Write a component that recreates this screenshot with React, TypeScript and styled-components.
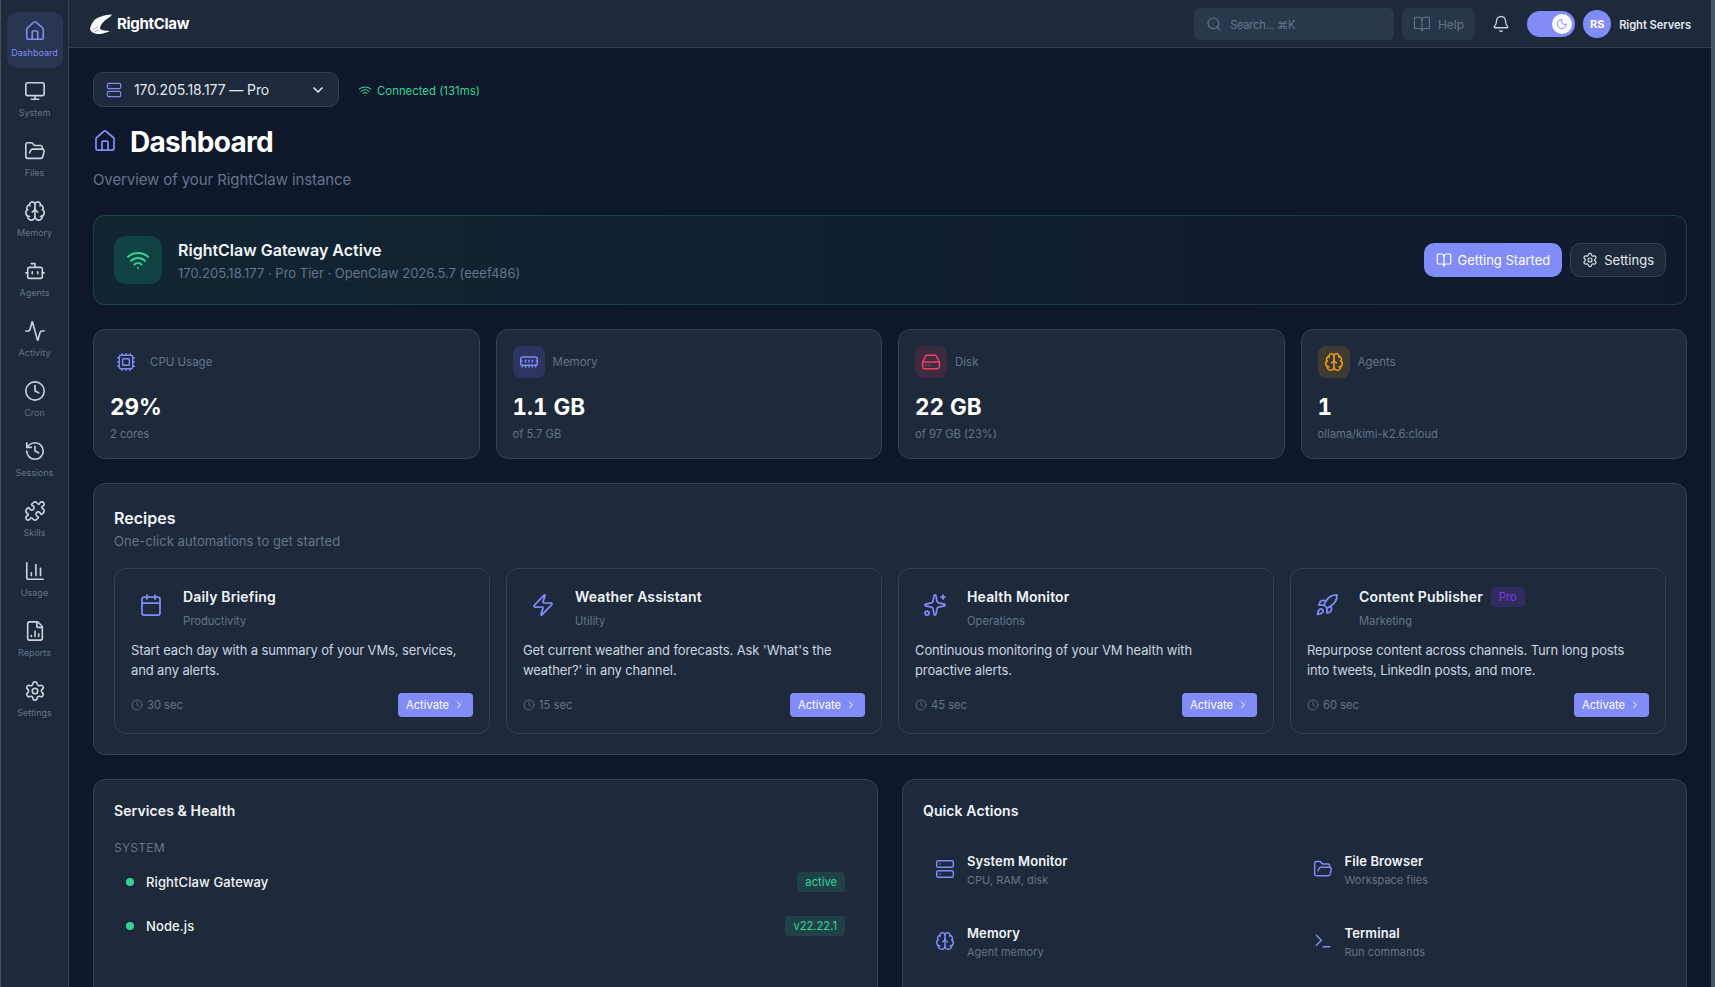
import { FC, ReactNode } from "react";
import styled, { createGlobalStyle } from "styled-components";
import {
  Activity,
  Bell,
  BookOpen,
  Bot,
  Brain,
  Calendar,
  ChartColumn,
  ChevronDown,
  ChevronRight,
  Clock,
  Cpu,
  FileChartColumn,
  FolderOpen,
  HardDrive,
  History,
  House,
  MemoryStick,
  Monitor,
  Moon,
  Puzzle,
  Rocket,
  Search,
  Server,
  Settings,
  Sparkles,
  Terminal,
  Wifi,
  Zap,
} from "lucide-react";

const GlobalStyle = createGlobalStyle`
  html, body {
    margin: 0;
    height: 100%;
    background: #0f172a;
    font-family: "Inter", "Liberation Sans", sans-serif;
    overflow: hidden;
  }
  * {
    box-sizing: border-box;
  }
`;

const navItems = [
  { label: "Dashboard", icon: House },
  { label: "System", icon: Monitor },
  { label: "Files", icon: FolderOpen },
  { label: "Memory", icon: Brain },
  { label: "Agents", icon: Bot },
  { label: "Activity", icon: Activity },
  { label: "Cron", icon: Clock },
  { label: "Sessions", icon: History },
  { label: "Skills", icon: Puzzle },
  { label: "Usage", icon: ChartColumn },
  { label: "Reports", icon: FileChartColumn },
  { label: "Settings", icon: Settings },
];

const stats = [
  { label: "CPU Usage", value: "29%", sub: "2 cores", icon: Cpu, color: "#818cf8", tint: "transparent" },
  { label: "Memory", value: "1.1 GB", sub: "of 5.7 GB", icon: MemoryStick, color: "#818cf8", tint: "rgba(99, 102, 241, 0.2)" },
  { label: "Disk", value: "22 GB", sub: "of 97 GB (23%)", icon: HardDrive, color: "#f43f5e", tint: "rgba(244, 63, 94, 0.15)" },
  { label: "Agents", value: "1", sub: "ollama/kimi-k2.6:cloud", icon: Brain, color: "#f59e0b", tint: "rgba(245, 158, 11, 0.15)" },
];

const recipes = [
  {
    title: "Daily Briefing",
    category: "Productivity",
    text: "Start each day with a summary of your VMs, services, and any alerts.",
    time: "30 sec",
    icon: Calendar,
  },
  {
    title: "Weather Assistant",
    category: "Utility",
    text: "Get current weather and forecasts. Ask 'What's the weather?' in any channel.",
    time: "15 sec",
    icon: Zap,
  },
  {
    title: "Health Monitor",
    category: "Operations",
    text: "Continuous monitoring of your VM health with proactive alerts.",
    time: "45 sec",
    icon: Sparkles,
  },
  {
    title: "Content Publisher",
    category: "Marketing",
    text: "Repurpose content across channels. Turn long posts into tweets, LinkedIn posts, and more.",
    time: "60 sec",
    icon: Rocket,
    pro: true,
  },
];

const quickActions = [
  { title: "System Monitor", sub: "CPU, RAM, disk", icon: Server },
  { title: "File Browser", sub: "Workspace files", icon: FolderOpen },
  { title: "Memory", sub: "Agent memory", icon: Brain },
  { title: "Terminal", sub: "Run commands", icon: Terminal },
];

const Logo: FC = () => (
  <svg width="22" height="20" viewBox="0 0 22 20" fill="none">
    <path
      d="M22 .5C15 1 8 2.5 4 6.5C2 9 .5 12 0 15C.5 17.5 3 19.5 7 20C11 20.3 15 19.3 20 17C16 16.5 12.5 17 10 15C10 11 14 7 17 5C19 3.8 21 2.2 22 .5Z"
      fill="#f8fafc"
    />
    <path d="M2.5 16.5C4 15 6 13.5 8 12.5M4.5 18C6 17 7.5 16.2 9 15.8" stroke="#94a3b8" strokeWidth="0.9" />
  </svg>
);

const Panel: FC<{ title: string; children: ReactNode }> = ({ title, children }) => (
  <Card>
    <PanelTitle>{title}</PanelTitle>
    {children}
  </Card>
);

export default function App() {
  return (
    <>
      <GlobalStyle />
      <Shell>
        <Sidebar>
          {navItems.map(({ label, icon: Icon }, i) => (
            <NavItem key={label} $active={i === 0}>
              <Icon size={22} strokeWidth={1.75} />
              <span>{label}</span>
            </NavItem>
          ))}
        </Sidebar>
        <Column>
          <TopBar>
            <Brand>
              <Logo />
              <span>RightClaw</span>
            </Brand>
            <TopActions>
              <SearchBox>
                <Search size={16} strokeWidth={1.75} />
                <span>Search... ⌘K</span>
              </SearchBox>
              <HelpButton>
                <BookOpen size={18} strokeWidth={1.5} />
                <span>Help</span>
              </HelpButton>
              <BellWrap>
                <Bell size={18} strokeWidth={1.75} />
              </BellWrap>
              <Toggle>
                <Knob>
                  <Moon size={12} strokeWidth={2} color="#818cf8" />
                </Knob>
              </Toggle>
              <UserBox>
                <Avatar>RS</Avatar>
                <UserName>Right Servers</UserName>
              </UserBox>
            </TopActions>
          </TopBar>
          <Main>
            <ServerRow>
              <ServerSelect>
                <ServerIcon>
                  <Server size={16} strokeWidth={1.75} />
                </ServerIcon>
                <span>170.205.18.177 — Pro</span>
                <ChevronDown size={16} strokeWidth={2.5} />
              </ServerSelect>
              <Connected>
                <Wifi size={14} strokeWidth={1.75} />
                <span>Connected (131ms)</span>
              </Connected>
            </ServerRow>

            <TitleRow>
              <TitleIcon>
                <House size={24} strokeWidth={1.75} />
              </TitleIcon>
              <h1>Dashboard</h1>
            </TitleRow>
            <Subtitle>Overview of your RightClaw instance</Subtitle>

            <Banner>
              <BannerIcon>
                <Wifi size={24} strokeWidth={2} />
              </BannerIcon>
              <BannerText>
                <BannerTitle>RightClaw Gateway Active</BannerTitle>
                <BannerSub>170.205.18.177 · Pro Tier · OpenClaw 2026.5.7 (eeef486)</BannerSub>
              </BannerText>
              <BannerActions>
                <PrimaryButton>
                  <BookOpen size={16} strokeWidth={1.75} />
                  Getting Started
                </PrimaryButton>
                <GhostButton>
                  <Settings size={16} strokeWidth={1.75} />
                  Settings
                </GhostButton>
              </BannerActions>
            </Banner>

            <StatGrid>
              {stats.map(({ label, value, sub, icon: Icon, color, tint }) => (
                <StatCard key={label}>
                  <StatHead>
                    <StatIcon $tint={tint} $color={color}>
                      <Icon size={20} strokeWidth={1.75} />
                    </StatIcon>
                    <span>{label}</span>
                  </StatHead>
                  <StatValue>{value}</StatValue>
                  <StatSub>{sub}</StatSub>
                </StatCard>
              ))}
            </StatGrid>

            <RecipesCard>
              <RecipesTitle>Recipes</RecipesTitle>
              <RecipesSub>One-click automations to get started</RecipesSub>
              <RecipeGrid>
                {recipes.map(({ title, category, text, time, icon: Icon, pro }) => (
                  <RecipeCard key={title}>
                    <RecipeHead>
                      <RecipeIcon>
                        <Icon size={24} strokeWidth={1.75} />
                      </RecipeIcon>
                      <div>
                        <RecipeTitle>
                          {title}
                          {pro && <ProTag>Pro</ProTag>}
                        </RecipeTitle>
                        <RecipeCategory>{category}</RecipeCategory>
                      </div>
                    </RecipeHead>
                    <RecipeText>{text}</RecipeText>
                    <RecipeFoot>
                      <RecipeTime>
                        <Clock size={12} strokeWidth={1.75} />
                        {time}
                      </RecipeTime>
                      <ActivateButton>
                        Activate
                        <ChevronRight size={12} strokeWidth={2} />
                      </ActivateButton>
                    </RecipeFoot>
                  </RecipeCard>
                ))}
              </RecipeGrid>
            </RecipesCard>

            <BottomGrid>
              <Panel title="Services & Health">
                <GroupLabel>System</GroupLabel>
                <ServiceRow>
                  <Dot />
                  <ServiceName>RightClaw Gateway</ServiceName>
                  <StatusTag>active</StatusTag>
                </ServiceRow>
                <ServiceRow>
                  <Dot />
                  <ServiceName>Node.js</ServiceName>
                  <StatusTag>v22.22.1</StatusTag>
                </ServiceRow>
              </Panel>
              <Panel title="Quick Actions">
                <QuickGrid>
                  {quickActions.map(({ title, sub, icon: Icon }) => (
                    <QuickItem key={title}>
                      <Icon size={20} strokeWidth={1.75} />
                      <QuickText>
                        <QuickTitle>{title}</QuickTitle>
                        <QuickSub>{sub}</QuickSub>
                      </QuickText>
                    </QuickItem>
                  ))}
                </QuickGrid>
              </Panel>
            </BottomGrid>
          </Main>
        </Column>
      </Shell>
    </>
  );
}

const Shell = styled.div`
  display: flex;
  height: 987px;
  width: 1715px;
  overflow: hidden;
  background: #0f172a;
  border-left: 1px solid #4b4f55;
  border-right: 4px solid #475569;
`;

const Sidebar = styled.nav`
  flex: none;
  width: 68px;
  height: 100%;
  padding-top: 12px;
  display: flex;
  flex-direction: column;
  align-items: center;
  gap: 4px;
  background: #1e293b;
  border-right: 1px solid #334155;
`;

const NavItem = styled.a<{ $active?: boolean }>`
  width: 56px;
  height: 56px;
  flex: none;
  display: flex;
  flex-direction: column;
  align-items: center;
  justify-content: center;
  gap: 5px;
  padding-bottom: 1px;
  border-radius: 10px;
  color: ${(p) => (p.$active ? "#818cf8" : "#cbd5e1")};
  background: ${(p) => (p.$active ? "rgba(129, 140, 248, 0.12)" : "transparent")};

  span {
    font-size: 9px;
    line-height: 12px;
    color: ${(p) => (p.$active ? "#818cf8" : "#64748b")};
  }
`;

const Column = styled.div`
  flex: 1;
  min-width: 0;
  display: flex;
  flex-direction: column;
`;

const TopBar = styled.header`
  flex: none;
  height: 48px;
  display: flex;
  align-items: center;
  justify-content: space-between;
  padding: 0 20px 0 21px;
  background: #1e293b;
  border-bottom: 1px solid #334155;
`;

const Brand = styled.div`
  display: flex;
  align-items: center;
  gap: 5px;
  color: #ffffff;
  font-size: 15px;
  font-weight: 700;
  letter-spacing: -0.02em;
`;

const TopActions = styled.div`
  display: flex;
  align-items: center;
`;

const SearchBox = styled.div`
  width: 200px;
  height: 32px;
  display: flex;
  align-items: center;
  gap: 8px;
  padding: 0 12px;
  border-radius: 6px;
  background: #2b384c;
  color: #64748b;
  font-size: 11.2px;
  letter-spacing: -0.3px;

  span {
    padding-top: 2px;
  }
`;

const HelpButton = styled.div`
  height: 32px;
  width: 73px;
  margin-left: 8px;
  display: flex;
  align-items: center;
  gap: 7px;
  padding: 0 11px;
  border-radius: 6px;
  background: #293548;
  color: #64748b;
  font-size: 12px;

  span {
    padding-top: 2px;
  }
`;

const BellWrap = styled.div`
  margin-left: 17px;
  display: flex;
  color: #cbd5e1;
`;

const Toggle = styled.div`
  width: 48px;
  height: 26px;
  margin-left: 17px;
  display: flex;
  align-items: center;
  justify-content: flex-end;
  padding-right: 3px;
  border-radius: 13px;
  background: #818cf8;
`;

const Knob = styled.div`
  width: 20px;
  height: 20px;
  display: flex;
  align-items: center;
  justify-content: center;
  border-radius: 50%;
  background: #ffffff;
`;

const UserBox = styled.div`
  margin-left: 8px;
  display: flex;
  align-items: center;
  gap: 8px;
`;

const Avatar = styled.div`
  width: 28px;
  height: 28px;
  display: flex;
  align-items: center;
  justify-content: center;
  border-radius: 50%;
  background: #818cf8;
  color: #ffffff;
  font-size: 11px;
  font-weight: 700;
`;

const UserName = styled.span`
  padding-top: 2px;
  color: #e2e8f0;
  font-size: 11.2px;
  font-weight: 600;
  letter-spacing: -0.08px;
`;

const Main = styled.main`
  flex: 1;
  min-height: 0;
  overflow: hidden;
  padding: 24px;
`;

const ServerRow = styled.div`
  display: flex;
  align-items: center;
  gap: 19px;
`;

const ServerSelect = styled.div`
  width: 246px;
  height: 35px;
  display: flex;
  align-items: center;
  padding: 0 12px;
  border-radius: 10px;
  background: #1e293b;
  border: 1px solid #334155;
  color: #e2e8f0;
  font-size: 14px;
  letter-spacing: -0.1px;

  span {
    flex: 1;
  }
`;

const ServerIcon = styled.div`
  display: flex;
  color: #818cf8;
  margin-right: 12px;
`;

const Connected = styled.div`
  display: flex;
  align-items: center;
  gap: 5px;
  padding-top: 2px;
  color: #34d399;
  font-size: 11.4px;
`;

const TitleRow = styled.div`
  display: flex;
  align-items: center;
  gap: 13px;
  margin: 15px 0 0 0;
  height: 40px;

  h1 {
    margin: 0;
    color: #ffffff;
    font-size: 28px;
    line-height: 40px;
    font-weight: 700;
    letter-spacing: -0.025em;
  }
`;

const TitleIcon = styled.div`
  display: flex;
  padding-bottom: 2px;
  color: #818cf8;
`;

const Subtitle = styled.p`
  margin: 7px 0 0;
  color: #64748b;
  font-size: 15px;
  line-height: 22px;
  letter-spacing: -0.1px;
`;

const Banner = styled.section`
  margin-top: 24px;
  height: 90px;
  display: flex;
  align-items: center;
  padding: 0 20px;
  border-radius: 12px;
  border: 1px solid rgba(52, 211, 153, 0.2);
  background: linear-gradient(90deg, rgba(52, 211, 153, 0.08), rgba(129, 140, 248, 0.02));
`;

const BannerIcon = styled.div`
  width: 48px;
  height: 48px;
  display: flex;
  align-items: center;
  justify-content: center;
  border-radius: 12px;
  background: rgba(16, 185, 129, 0.2);
  color: #34d399;
`;

const BannerText = styled.div`
  flex: 1;
  margin-left: 16px;
`;

const BannerTitle = styled.div`
  color: #f1f5f9;
  font-size: 16px;
  line-height: 24px;
  font-weight: 600;
`;

const BannerSub = styled.div`
  margin-top: 1px;
  color: #64748b;
  font-size: 13px;
  line-height: 20px;
`;

const BannerActions = styled.div`
  display: flex;
  gap: 8px;
`;

const PrimaryButton = styled.button`
  height: 34px;
  display: flex;
  align-items: center;
  gap: 6px;
  padding: 0 12px;
  border: 0;
  border-radius: 10px;
  background: #818cf8;
  color: #ffffff;
  font: 400 13px "Inter", sans-serif;
`;

const GhostButton = styled(PrimaryButton)`
  padding: 0 11px;
  background: #1e293b;
  border: 1px solid #334155;
  color: #e2e8f0;
`;

const StatGrid = styled.div`
  margin-top: 24px;
  display: grid;
  grid-template-columns: repeat(4, 1fr);
  gap: 16px;
`;

const Card = styled.section`
  background: #1e293b;
  border: 1px solid #334155;
  border-radius: 12px;
  padding: 20px;
`;

const StatCard = styled(Card)`
  height: 130px;
  padding: 16px;
`;

const StatHead = styled.div`
  display: flex;
  align-items: center;
  gap: 8px;
  color: #64748b;
  font-size: 11.5px;
`;

const StatIcon = styled.div<{ $tint: string; $color: string }>`
  width: 32px;
  height: 32px;
  display: flex;
  align-items: center;
  justify-content: center;
  border-radius: 8px;
  background: ${(p) => p.$tint};
  color: ${(p) => p.$color};
`;

const StatValue = styled.div`
  margin-top: 13px;
  color: #ffffff;
  font-size: 22.4px;
  line-height: 32px;
  font-weight: 700;
  font-variant-numeric: tabular-nums;
`;

const StatSub = styled.div`
  margin-top: 3px;
  color: #64748b;
  font-size: 11.2px;
  line-height: 16px;
`;

const RecipesCard = styled(Card)`
  margin-top: 24px;
`;

const RecipesTitle = styled.h2`
  margin: 2px 0 0;
  color: #f1f5f9;
  font-size: 16px;
  line-height: 24px;
  font-weight: 600;
`;

const RecipesSub = styled.div`
  margin-top: 1px;
  color: #64748b;
  font-size: 13px;
  line-height: 20px;
  letter-spacing: 0.05px;
`;

const RecipeGrid = styled.div`
  margin-top: 17px;
  display: grid;
  grid-template-columns: repeat(4, 1fr);
  gap: 16px;
`;

const RecipeCard = styled.article`
  height: 166px;
  padding: 16px;
  display: flex;
  flex-direction: column;
  border: 1px solid #334155;
  border-radius: 12px;
`;

const RecipeHead = styled.div`
  display: flex;
  gap: 12px;
`;

const RecipeIcon = styled.div`
  width: 40px;
  height: 40px;
  flex: none;
  display: flex;
  align-items: center;
  justify-content: center;
  color: #818cf8;
`;

const RecipeTitle = styled.div`
  display: flex;
  align-items: center;
  gap: 8px;
  color: #f1f5f9;
  font-size: 14px;
  line-height: 24px;
  font-weight: 600;
  letter-spacing: 0.15px;
`;

const ProTag = styled.span`
  height: 20px;
  padding: 0 8px;
  display: inline-flex;
  align-items: center;
  border-radius: 4px;
  background: rgba(124, 58, 237, 0.2);
  color: #7c3aed;
  font-size: 11.2px;
  font-weight: 400;
  letter-spacing: 0;
`;

const RecipeCategory = styled.div`
  margin-top: 4px;
  color: #64748b;
  font-size: 11.2px;
  line-height: 16px;
`;

const RecipeText = styled.p`
  margin: 11px 0 0;
  padding-right: 10px;
  flex: 1;
  color: #cbd5e1;
  font-size: 13px;
  line-height: 20px;
  letter-spacing: -0.12px;
`;

const RecipeFoot = styled.div`
  display: flex;
  align-items: center;
  justify-content: space-between;
`;

const RecipeTime = styled.div`
  display: flex;
  align-items: center;
  gap: 4px;
  color: #64748b;
  font-size: 11.2px;
`;

const ActivateButton = styled.button`
  height: 24px;
  display: flex;
  align-items: center;
  gap: 4px;
  padding: 0 8px;
  border: 0;
  border-radius: 4px;
  background: #818cf8;
  color: #ffffff;
  font: 400 11.2px "Inter", sans-serif;
`;

const BottomGrid = styled.div`
  margin-top: 24px;
  display: grid;
  grid-template-columns: 1fr 1fr;
  gap: 24px;
  height: 320px;
`;

const PanelTitle = styled.h2`
  margin: 0;
  color: #f1f5f9;
  font-size: 14px;
  line-height: 22px;
  font-weight: 600;
  letter-spacing: 0.1px;
`;

const GroupLabel = styled.div`
  margin: 18px 0 4px;
  color: #64748b;
  font-size: 12px;
  line-height: 16px;
  text-transform: uppercase;
  letter-spacing: 0.02em;
`;

const ServiceRow = styled.div`
  height: 44px;
  display: flex;
  align-items: center;
  padding: 0 12px;
`;

const Dot = styled.span`
  width: 8px;
  height: 8px;
  border-radius: 50%;
  background: #34d399;
`;

const ServiceName = styled.span`
  flex: 1;
  margin-left: 12px;
  color: #f1f5f9;
  font-size: 13px;
  font-weight: 500;
  letter-spacing: 0.1px;
`;

const StatusTag = styled.span`
  height: 20px;
  padding: 0 8px;
  display: inline-flex;
  align-items: center;
  border-radius: 4px;
  background: rgba(52, 211, 153, 0.15);
  color: #34d399;
  font-size: 11.2px;
  letter-spacing: 0;
`;

const QuickGrid = styled.div`
  margin-top: 17px;
  display: grid;
  grid-template-columns: 1fr 1fr;
  gap: 12px;
`;

const QuickItem = styled.div`
  height: 60px;
  display: flex;
  align-items: center;
  gap: 12px;
  padding: 0 12px;
  color: #818cf8;
`;

const QuickText = styled.div`
  margin-top: 2px;
`;

const QuickTitle = styled.div`
  color: #f1f5f9;
  font-size: 13px;
  line-height: 18px;
  font-weight: 600;
  letter-spacing: 0.1px;
`;

const QuickSub = styled.div`
  margin-top: 2px;
  color: #64748b;
  font-size: 11px;
  line-height: 16px;
`;
